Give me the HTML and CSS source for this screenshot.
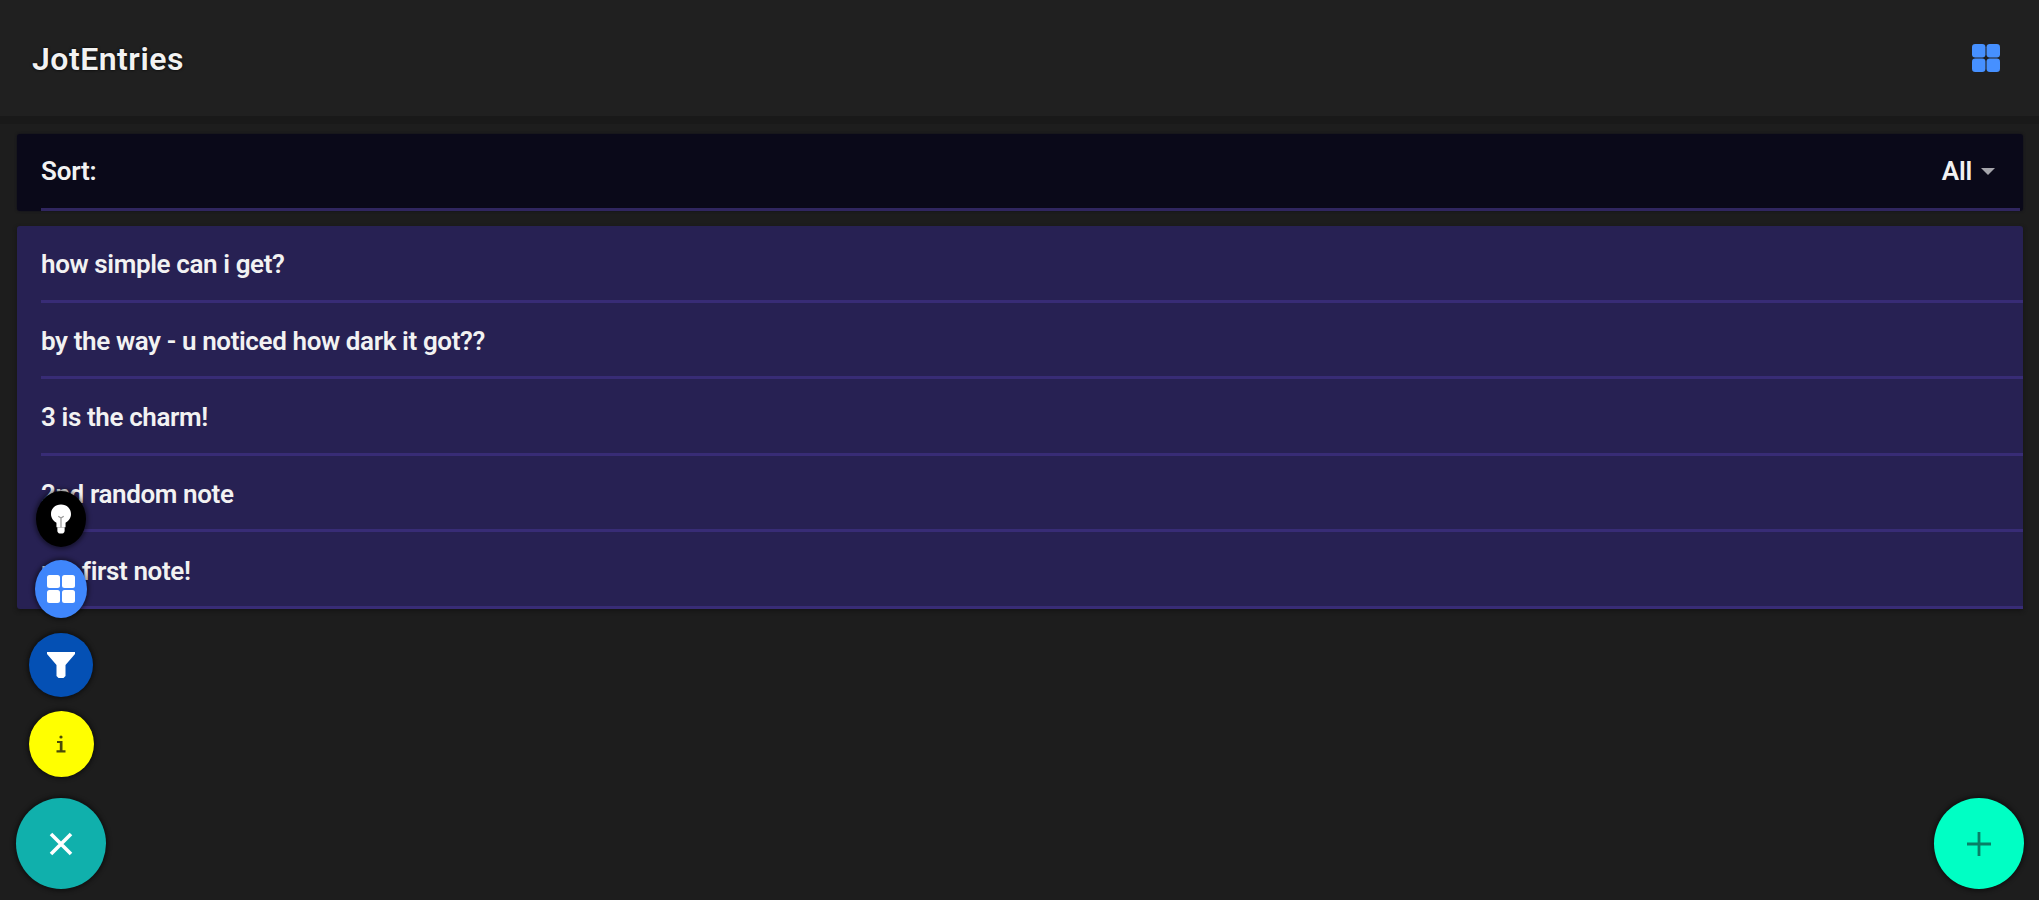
FILE: index.html
```
<!DOCTYPE html>
<html lang="en">
<head>
    <meta charset="UTF-8">
    <meta name="viewport" content="width=device-width, initial-scale=1.0">
    <title>JotEntries</title>
    <link rel="stylesheet" href="styles.css">
</head>
<body>
    <header class="header">
        <h1 class="title">JotEntries</h1>
        <button class="view-btn" aria-label="Grid view">
            <svg width="28" height="28" viewBox="0 0 30 30" fill="currentColor">
                <rect x="0" y="0" width="14.4" height="14.4" rx="3.500"/>
                <rect x="15.6" y="0" width="14.4" height="14.4" rx="3.500"/>
                <rect x="0" y="15.6" width="14.4" height="14.4" rx="3.500"/>
                <rect x="15.6" y="15.6" width="14.4" height="14.4" rx="3.500"/>
            </svg>
        </button>
    </header>

    <main class="content">
        <div class="sort">
            <div class="sort-inner">
                <span>Sort:</span>
                <span class="sort-value">All <i class="arrow"></i></span>
            </div>
        </div>
        <ul class="notes">
            <li class="note"><span>how simple can i get?</span></li>
            <li class="note"><span>by the way - u noticed how dark it got??</span></li>
            <li class="note"><span>3 is the charm!</span></li>
            <li class="note"><span>2nd random note</span></li>
            <li class="note"><span>my first note!</span></li>
        </ul>
    </main>

    <div class="fab-menu">
        <button class="fab bulb" aria-label="Theme">
            <svg width="20" height="30" viewBox="0 0 22 32" fill="currentColor">
                <path d="M11 0C4.500 0 0 4.500 0 10.500C0 14.800 2.600 18.200 6 20V25H16V20C19.400 18.200 22 14.800 22 10.500C22 4.500 17.500 0 11 0Z"/>
                <path d="M7 25H15V29C15 30.500 14 32 12.500 32H9.500C8 32 7 30.500 7 29Z"/>
                <path d="M8 13L11 15L14 13M11 15V25" fill="none" stroke="#000" stroke-opacity="0.4" stroke-width="1.4"/>
            </svg>
        </button>
        <button class="fab grid" aria-label="Grid">
            <svg width="28" height="28" viewBox="0 0 28 28" fill="currentColor">
                <rect x="0" y="0" width="13" height="13" rx="2.500"/>
                <rect x="15" y="0" width="13" height="13" rx="2.500"/>
                <rect x="0" y="15" width="13" height="13" rx="2.500"/>
                <rect x="15" y="15" width="13" height="13" rx="2.500"/>
            </svg>
        </button>
        <button class="fab filter" aria-label="Filter">
            <svg width="28" height="26" viewBox="0 0 28 26" fill="currentColor">
                <path d="M0 0H28V2L18.500 13V24L16.500 26H11.500L9.500 24V13L0 2Z"/>
            </svg>
        </button>
        <button class="fab info" aria-label="Info">
            <svg width="10" height="18" viewBox="0 0 10 18" fill="currentColor">
                <circle cx="5" cy="2" r="1.600"/>
                <path d="M1 6H6.500V15.200H9.500V17.500H0.500V15.200H3.800V8H1Z"/>
            </svg>
        </button>
        <button class="fab close" aria-label="Close">
            <svg width="24" height="24" viewBox="0 0 24 24" fill="none" stroke="currentColor" stroke-width="3.600">
                <path d="M2 2L22 22M22 2L2 22"/>
            </svg>
        </button>
    </div>

    <button class="fab add" aria-label="Add note">
        <svg width="24" height="24" viewBox="0 0 24 24" fill="none" stroke="currentColor" stroke-width="2.800">
            <path d="M12 0V24M0 12H24"/>
        </svg>
    </button>
</body>
</html>
```

FILE: styles.css
```
* {
    box-sizing: border-box;
}
body {
    margin: 0;
    height: 100vh;
    overflow: hidden;
    background-color: #1d1d1d;
    color: #f2f2f2;
    font-family: Roboto, sans-serif;
    font-size: 26px;
    font-weight: 500;
}
button {
    display: flex;
    align-items: center;
    justify-content: center;
    padding: 0;
    border: none;
    background: none;
    cursor: pointer;
}
.header {
    display: flex;
    align-items: center;
    justify-content: space-between;
    height: 124px;
    padding: 0 39px 0 32px;
    background-color: #202020;
    border-bottom: 8px solid #191919;
}
.title {
    margin: 2px 0 0;
    font-size: 32px;
    font-weight: 600;
    letter-spacing: 0.5px;
    text-shadow: 0 0 3px #000;
}
.view-btn {
    color: #4690ff;
}
.content {
    padding: 10px 16px 0 17px;
}
.sort {
    height: 77px;
    padding: 0 3px 0 24px;
    background-color: #0a0919;
    border-radius: 3px;
    box-shadow: 0 0 3px #10101a;
}
.sort-inner {
    display: flex;
    align-items: center;
    justify-content: space-between;
    height: 77px;
    padding-right: 25px;
    font-weight: 600;
    letter-spacing: -0.2px;
    border-bottom: 3px solid #30265f;
}
.sort-value {
    display: flex;
    align-items: center;
    gap: 9px;
}
.arrow {
    border-left: 7px solid transparent;
    border-right: 7px solid transparent;
    border-top: 7px solid #a5a5ab;
}
.notes {
    list-style: none;
    margin: 15px 0 0;
    padding: 0 0 0 24px;
    background-color: #272153;
    border-radius: 3px;
    box-shadow: 0 2px 4px #141414;
}
.note {
    display: flex;
    align-items: center;
    height: 76.6px;
    padding-top: 3px;
    font-weight: 600;
    letter-spacing: -0.38px;
    border-bottom: 3px solid #382c76;
}
.fab-menu {
    position: fixed;
    left: 16px;
    bottom: 11px;
    display: flex;
    flex-direction: column;
    align-items: center;
}
.fab {
    border-radius: 50%;
    color: #fff;
    box-shadow: 0 0 4px 2px rgba(0, 0, 0, 0.45);
}
.bulb {
    width: 50px;
    height: 56px;
    margin-bottom: 13px;
    background-color: #000;
}
.grid {
    width: 52px;
    height: 58px;
    margin-bottom: 15px;
    background-color: #3f86fb;
}
.filter {
    width: 64px;
    height: 64px;
    margin-bottom: 14px;
    background-color: #0450b4;
}
.info {
    width: 65px;
    height: 66px;
    margin-bottom: 21px;
    background-color: #ffff00;
    color: #4b4b08;
}
.close {
    width: 90px;
    height: 91px;
    background-color: #10b0ac;
}
.add {
    position: fixed;
    right: 15px;
    bottom: 11px;
    width: 90px;
    height: 91px;
    background-color: #00ffc4;
    color: #087f66;
}
```
